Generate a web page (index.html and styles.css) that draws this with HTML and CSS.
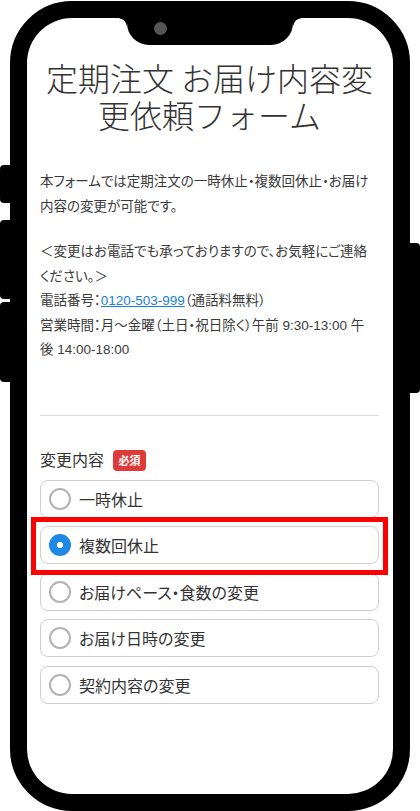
FILE: index.html
```html
<!DOCTYPE html>
<html lang="ja">
<head>
<meta charset="utf-8">
<title>定期注文 お届け内容変更依頼フォーム</title>
<link rel="stylesheet" href="styles.css">
</head>
<body>
<div class="device">
  <div class="side side-left">
    <span class="key key-1"></span>
    <span class="key key-2"></span>
    <span class="key key-3"></span>
  </div>
  <div class="phone">
    <div class="screen">
      <div class="notch"><span class="camera"></span></div>
      <h1 class="title">定期注文 お届け内容変更依頼フォーム</h1>
      <div class="intro">
        <p>本フォームでは定期注文の一時休止・複数回休止・お届け内容の変更が可能です。</p>
        <p class="contact">＜変更はお電話でも承っておりますので、お気軽にご連絡ください。＞<br>電話番号：<a href="#" class="tel">0120-503-999</a>（通話料無料）<br>営業時間：月〜金曜（土日・祝日除く）午前 9:30-13:00 午後 14:00-18:00</p>
      </div>
      <hr class="divider">
      <div class="field">
        <div class="field-label">変更内容<span class="badge">必須</span></div>
        <ul class="options">
          <li class="option"><span class="radio"></span><span class="option-text">一時休止</span></li>
          <li class="option"><span class="radio radio-checked"></span><span class="option-text">複数回休止</span></li>
          <li class="option"><span class="radio"></span><span class="option-text">お届けペース・食数の変更</span></li>
          <li class="option"><span class="radio"></span><span class="option-text">お届け日時の変更</span></li>
          <li class="option"><span class="radio"></span><span class="option-text">契約内容の変更</span></li>
        </ul>
      </div>
      <div class="highlight"></div>
    </div>
  </div>
  <div class="side side-right">
    <span class="key key-r"></span>
  </div>
</div>
</body>
</html>
```
FILE: styles.css
```css
* { box-sizing: border-box; }
html, body {
  margin: 0;
  padding: 0;
  background: #fff;
}
body {
  width: 420px;
  height: 811px;
  overflow: hidden;
  font-family: "Liberation Sans", "Noto Sans CJK JP", sans-serif;
  color: #333;
}
.device {
  display: flex;
  width: 420px;
  height: 811px;
}
.side {
  width: 10px;
  display: flex;
  flex-direction: column;
}
.side-left { padding-top: 165px; align-items: flex-end; }
.side-right { padding-top: 243px; align-items: flex-start; }
.key {
  display: block;
  width: 10px;
  background: #000;
}
.side-left .key { border-radius: 4px 0 0 4px; }
.key-1 { height: 38px; }
.key-2 { height: 79px; margin-top: 17px; }
.key-3 { height: 80px; margin-top: 3px; }
.key-r { height: 150px; border-radius: 0 4px 4px 0; }

.phone {
  width: 400px;
  height: 810px;
  margin-top: 1px;
  border: 17px solid #000;
  border-radius: 62px;
  background: #000;
}
.screen {
  position: relative;
  height: 100%;
  background: #fff;
  border-radius: 45px;
  overflow: hidden;
  padding: 0 14px 0 13px;
}
.notch {
  position: absolute;
  top: 0;
  left: 50%;
  width: 166px;
  height: 27px;
  margin-left: -83px;
  background: #000;
  border-radius: 0 0 22px 22px;
  padding: 4px 0 0 27px;
}
.notch::before,
.notch::after {
  content: "";
  position: absolute;
  top: 0;
  width: 9px;
  height: 9px;
}
.notch::before {
  left: -9px;
  background: radial-gradient(circle at 0 100%, transparent 8.5px, #000 9px);
}
.notch::after {
  right: -9px;
  background: radial-gradient(circle at 100% 100%, transparent 8.5px, #000 9px);
}
.camera {
  display: block;
  width: 13px;
  height: 13px;
  border-radius: 50%;
  background: #555;
}

.title {
  margin: 41px 0 0;
  font-size: 32px;
  line-height: 37px;
  font-weight: 300;
  text-align: center;
  color: #333;
  font-family: "Noto Sans CJK JP", sans-serif;
}
.intro {
  margin-top: 37px;
  padding-right: 6px;
  font-size: 13.5px;
  line-height: 24.5px;
  font-feature-settings: "palt";
  color: #3a3a3a;
}
.intro p { margin: 0; }
.intro .contact { margin-top: 21px; }
.tel {
  color: #1a7fdc;
  text-decoration: underline;
}
.divider {
  margin: 52px 0 0;
  border: 0;
  height: 1px;
  background: #dedede;
}
.field { margin-top: 31px; }
.field-label {
  display: flex;
  align-items: center;
  height: 24px;
  font-size: 16px;
  color: #333;
}
.badge {
  display: inline-flex;
  align-items: center;
  justify-content: center;
  width: 33px;
  height: 21px;
  margin: 3px 0 0 9px;
  background: #df3a3a;
  color: #fff;
  font-size: 11px;
  font-weight: bold;
  border-radius: 4px;
}
.options {
  list-style: none;
  margin: 9px 0 0;
  padding: 0;
  display: flex;
  flex-direction: column;
  gap: 8.5px;
}
.option {
  display: flex;
  align-items: center;
  gap: 8px;
  height: 38px;
  padding-left: 8px;
  border: 1px solid #cfcfcf;
  border-radius: 8px;
  font-size: 16px;
  font-feature-settings: "palt";
  color: #333;
}
.radio {
  flex: none;
  width: 22px;
  height: 22px;
  border-radius: 50%;
  border: 2px solid #b3b3b3;
  background: #fff;
}
.radio-checked {
  border-color: #1e88e5;
  background: radial-gradient(circle, #fff 2.8px, #1e88e5 3.4px);
}
.highlight {
  position: absolute;
  left: 4px;
  top: 499px;
  width: 357px;
  height: 58px;
  border: 5px solid #f00;
}
```
